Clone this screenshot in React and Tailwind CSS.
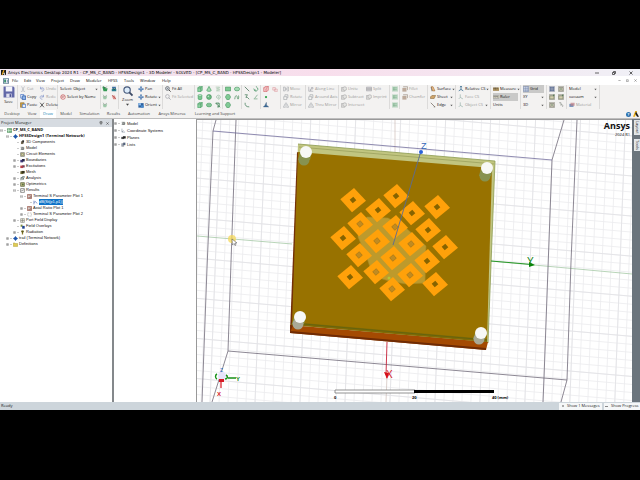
import React from "react";

const GREEN = "#3f9d5c";

/* Small 16x16 glyphs used by the menu bar, the ribbon and the trees. */
const GLYPHS = {
  app: <><rect x="1" y="2" width="14" height="12" fill="#fff" stroke="#4a6b86" strokeWidth="2" /><path d="M3 4h5v8H3z" fill="#3c8f72" /><path d="M10 5h3v7h-3z" fill="#7f97b5" /></>,
  logo: <><path d="M0 0h16v16H0z" fill="#1b1b1b" /><path d="M2 15 7 1h4L6 15z" fill="#ffb71b" /><path d="m10 7 4 8h-4l-2-4z" fill="#fff" /></>,
  logoLight: <><path d="M0 15 6 0h5L5 15z" fill="#e9ad12" /><path d="m8 1 8 14h-5L6 7z" fill="#1b1b1b" /></>,
  cut: <path d="m4 1 6 10M12 1 6 11M3 13a2 2 0 1 0 3-2M13 13a2 2 0 1 1-3-2" fill="none" stroke="#a8adb5" strokeWidth="1.6" />,
  undo: <path d="M4 2v6h6M4 8c3-5 9-4 9 1 0 3-3 5-6 5" fill="none" stroke="#8c9ccb" strokeWidth="2" />,
  redo: <path d="M12 2v6H6M12 8C9 3 3 4 3 9c0 3 3 5 6 5" fill="none" stroke="#8c9ccb" strokeWidth="2" />,
  copy: <><path d="M2 1h8v10H2z" fill="#fff" stroke="#4472c4" strokeWidth="2" /><path d="M6 5h9v10H6z" fill="#8db1e6" stroke="#2e5ca8" strokeWidth="2" /></>,
  paste: <><path d="M1 2h10v12H1z" fill="#d3a13a" stroke="#8a6420" strokeWidth="1.5" /><path d="M6 6h9v9H6z" fill="#e6effb" stroke="#4472c4" strokeWidth="2" /></>,
  x: <path d="m3 2 10 12M13 2 3 14" stroke="#444" strokeWidth="2.2" />,
  byname: <><circle cx="8" cy="8" r="6" fill="#fff" stroke="#c65454" strokeWidth="2" /><path d="M4 6h8M4 9h6" stroke="#b04a4a" strokeWidth="1.6" /></>,
  cart: <><path d="M1 2h5l2 4h7l-2 8H4z" fill="#379a55" /><path d="m4 1 4 5 4-4" stroke="#265e3a" strokeWidth="2" fill="none" /></>,
  cartBlue: <><path d="M2 8h12v6H2z" fill="#2b7f8f" /><path d="M3 2h10v5H3z" fill="#3b6ea5" /><path d="m5 5 3 5 5-4" stroke="#1d5740" strokeWidth="2" fill="none" /></>,
  cartRed: <><path d="M2 4h8l4 10H6z" fill="#e08b87" /><path d="m3 3 10 10" stroke="#a95e5e" strokeWidth="2" /></>,
  cartGrey: <><path d="M2 6h12l-3 8H4z" fill="#9fc9aa" /><path d="m3 2 4 6 6-5" stroke="#9aa69d" strokeWidth="2" fill="none" /></>,
  pan: <path d="M8 0 5 4h2v3H4V5L0 8l4 3V9h3v3H5l3 4 3-4H9V9h3v2l4-3-4-3v2H9V4h2z" fill="#2c63a5" />,
  orient: <><path d="M1 3h14v12H1z" fill="#2d62a0" /><path d="M1 3h7v6H1z" fill="#8dbbe8" /><path d="M8 9h7v6H8z" fill="#4588cc" /></>,
  fit: <><circle cx="6.500" cy="6.500" r="5" fill="#edf3fb" stroke="#56595f" strokeWidth="2" /><path d="m10 10 5 5" stroke="#444" strokeWidth="2.500" /><path d="M4 6.500h5M6.500 4v5" stroke="#56595f" strokeWidth="1.300" /></>,
  fitGrey: <><circle cx="6.500" cy="6.500" r="5" fill="#f1f1f1" stroke="#a9aab0" strokeWidth="2" /><path d="m10 10 5 5" stroke="#a9aab0" strokeWidth="2.500" /></>,
  box: <><path d="M2 5 6 1h8v10l-4 4H2z" fill="#8fd0a2" stroke={GREEN} strokeWidth="1.5" /><path d="M2 5h8v10M10 5l4-4" fill="none" stroke="#2c7a45" strokeWidth="1.2" /></>,
  cylinder: <><path d="M3 3v10c2 3 8 3 10 0V3z" fill="#7cc591" stroke={GREEN} strokeWidth="1.5" /><ellipse cx="8" cy="3.500" rx="5" ry="2.200" fill="#d1eeda" stroke={GREEN} /></>,
  cone: <path d="M8 1 2 12c2 3 10 3 12 0z" fill="#a9dab6" stroke={GREEN} strokeWidth="1.8" />,
  sphere: <><circle cx="8" cy="8" r="6.500" fill="#6dbd84" stroke="#37814d" strokeWidth="1.500" /><circle cx="6" cy="6" r="2" fill="#c8ebd2" /></>,
  torus: <><ellipse cx="8" cy="8" rx="7" ry="5" fill="#8ac89b" stroke={GREEN} strokeWidth="1.500" /><ellipse cx="8" cy="8" rx="3" ry="1.500" fill="#f2f1f0" stroke={GREEN} /></>,
  helix: <path d="M2 3h10c3 3-8 2-8 5h8c3 3-8 2-8 5h9" fill="none" stroke="#a1c4a9" strokeWidth="1.8" />,
  spiral: <path d="M8 8c1-2 3 0 2 2s-6 2-6-2 6-7 9-3 0 9-5 9" fill="none" stroke="#8eb79a" strokeWidth="1.7" />,
  bend: <path d="M2 3h9v10M2 3l11 11M11 13H6" fill="none" stroke="#3a7e50" strokeWidth="2.4" />,
  rect: <path d="M1 3h14v10H1z" fill="#7cc891" stroke="#3f9158" strokeWidth="1.6" />,
  ellipse: <ellipse cx="8" cy="8" rx="7" ry="5" fill="#a5dcb4" stroke="#459560" strokeWidth="1.6" />,
  hexagon: <path d="M5 1h6l4 7-4 7H5L1 8z" fill="#80ca95" stroke="#46945e" strokeWidth="1.5" />,
  wave: <path d="M2 14c1-12 6-12 7-4s5 2 3-6" fill="none" stroke="#519164" strokeWidth="2" />,
  line: <path d="m2 2 12 12" stroke="#2f5d41" strokeWidth="1.8" />,
  zig: <path d="M2 2h7L5 9h4l5 5" fill="none" stroke="#36704c" strokeWidth="1.800" />,
  arc: <path d="M3 2c-1 7 3 11 11 11" fill="none" stroke="#30704a" strokeWidth="1.8" />,
  arc3: <path d="M3 11c3 5 10 2 10-3S6 3 9 1M2 7l2 4 4 0" fill="none" stroke="#419160" strokeWidth="2" />,
  curve: <path d="M2 13h10M4 12 12 2" fill="none" stroke="#75a786" strokeWidth="2" />,
  redbox: <><path d="M2 5 6 1h8v10l-4 4H2z" fill="#fbe1e1" stroke="#cf5a60" strokeWidth="1.8" /><path d="M2 5h8v10M10 5l4-4M6 8v5" fill="none" stroke="#cf5a60" strokeWidth="1.5" /></>,
  pinkbox: <><path d="M2 4h7v7H2zM7 8h7v7H7z" fill="#f7e4e4" stroke="#dca1a5" strokeWidth="1.5" /></>,
  point: <circle cx="8" cy="8" r="3" fill="#2da248" />,
  plane: <path d="M1 13h14L9 8V1L5 9z" fill="#3e6f9c" stroke="#2c4c70" />,
  move: <path d="M1 3h5v10H1zM10 3h5v10h-5M5 8h6M9 5l3 3-3 3" fill="none" stroke="#999da3" strokeWidth="1.5" />,
  rotate: <path d="M2 7h8v8H2zM5 5V2h8v8h-2" fill="none" stroke="#999da3" strokeWidth="1.6" />,
  mirror: <path d="M8 1v14M6 4 1 14h5M10 4l5 10h-5" fill="none" stroke="#9fa2a8" strokeWidth="1.6" />,
  along: <path d="M2 2v12h12M5 9h3v3H5M9 4h4v4H9z" fill="none" stroke="#969aa0" strokeWidth="1.5" />,
  bool: <><path d="M1 4h9v10H1z" fill="#dddcda" stroke="#a5a5a5" strokeWidth="1.5" /><circle cx="10" cy="7" r="5" fill="#e4e4e2" stroke="#a5a5a5" strokeWidth="1.500" /></>,
  split: <><path d="M1 3h14v10H1z" fill="#cfced2" stroke="#a0a0a5" strokeWidth="1.5" /><path d="M1 8h14" stroke="#888" strokeWidth="1.5" /></>,
  sweep: <><path d="M0 1h16v14H0z" fill="#c3dac9" /><path d="M3 5h10M3 10h10M5 4v8" stroke="#6faa80" strokeWidth="1.6" /></>,
  fillet: <><path d="M1 5h11v10H1z" fill="#bdaa9b" /><path d="M3 2h12v9" fill="none" stroke="#a3978c" strokeWidth="2" /></>,
  surface: <><path d="M3 2h5l5 11H7z" fill="#efc28e" stroke="#a0672c" strokeWidth="1.6" /><path d="m3 3 2 11" stroke="#555" strokeWidth="1.5" /></>,
  sheet: <path d="M1 8 5 4h10l-4 8H1z" fill="#cfa369" stroke="#89693f" strokeWidth="1.500" />,
  edge: <path d="m2 2 11 11M10 13h4" stroke="#655b50" strokeWidth="1.8" />,
  cs: <path d="M8 9V1M8 9l6 4M8 9l-6 4M6 3l2-3 2 3" fill="none" stroke="#3b6f92" strokeWidth="2.200" />,
  csGrey: <path d="M6 9V1M6 9l7 4M6 9l-4 4" fill="none" stroke="#9cb5ae" strokeWidth="2" />,
  measure: <><path d="M0 4h16v9H0z" fill="#a78d5c" /><path d="M3 4v4M7 4v5M11 4v4" stroke="#403a2f" strokeWidth="1.5" /></>,
  ruler: <><path d="M0 5h16v6H0z" fill="#ddd9c8" stroke="#666" /><path d="M3 5v3M6 5v4M9 5v3M12 5v4" stroke="#333" /></>,
  grid: <path d="M1 1h14v14H1zM1 6h14M1 11h14M6 1v14M11 1v14" fill="#e8edf8" stroke="#6679a0" strokeWidth="1.4" />,
  snapGrid: <><path d="M0 0h16v16H0z" fill="#b9bdc7" /><path d="M2 4h12M2 8h12M2 12h12M4 2v12M8 2v12M12 2v12" stroke="#4b5f8a" strokeWidth="1.3" /></>,
  snapA: <><path d="M0 0h16v16H0z" fill="#bbbab2" /><path d="M3 4h10v9H3z" fill="#ded9c4" stroke="#7b7c70" strokeWidth="1.5" /><circle cx="8" cy="8" r="2" fill="#44694b" /></>,
  snapB: <><path d="M0 0h16v16H0z" fill="#b8b8b0" /><path d="M2 5h11v8H2z" fill="#d2cfad" stroke="#7a7c68" strokeWidth="1.5" /><path d="m11 5 3-3" stroke="#567d54" strokeWidth="3" /></>,
  snapC: <path d="M3 2h5v7M8 9c1-5 7-1 4 4" fill="none" stroke="#7b817a" strokeWidth="1.600" />,
  material: <><path d="M1 5h11v8H1z" fill="#6d8db8" /><path d="M4 2h11v8H4z" fill="#c18489" opacity=".75" /></>,
  project: <><path d="M1 2h14v12H1z" fill="#7dbc89" stroke="#438452" strokeWidth="2" /><path d="M5 2v12M1 8h14" stroke="#e3f4e6" strokeWidth="1.5" /></>,
  design: <path d="m8 0 3 4 5 4-5 4-3 4-3-4-5-4 5-4z" fill="#1d55ac" />,
  comp: <><path d="M3 4h8v9H3z" fill="#726854" /><path d="M7 1h6v7H7z" fill="#32312c" /></>,
  model: <><circle cx="8" cy="8" r="5" fill="#9b9d9d" /><path d="M2 4h10v7H2" fill="none" stroke="#5b605d" strokeWidth="1.600" /></>,
  circuit: <><path d="M2 2h12v12H2z" fill="#d4d2b8" stroke="#575750" strokeWidth="1.800" /><path d="M4 5h7v6H5z" fill="none" stroke="#7e7d42" strokeWidth="1.600" /></>,
  bound: <><path d="M1 6h9v8H1z" fill="#3d3778" /><path d="M6 3h9v8H8z" fill="#252546" /></>,
  excite: <><path d="M1 5h9v8H1z" fill="#bc3f45" /><path d="M7 4h8v7H9z" fill="#714159" /></>,
  mesh: <><path d="M1 4h10v9H1z" fill="#75703a" /><path d="M5 3h10v8H5z" fill="#36331d" /></>,
  analysis: <path d="M3 14V5h7M7 2h7L9 13M4 9h7" fill="none" stroke="#374c48" strokeWidth="2" />,
  opti: <><path d="M2 2h12v12H2z" fill="#bab782" stroke="#4e5530" strokeWidth="2" /><circle cx="9" cy="8" r="3" fill="#5a7140" /></>,
  results: <><path d="M2 2h12v12H2z" fill="#fff" stroke="#5b5b58" strokeWidth="2" /><path d="m4 11 3-5 2 3 3-5" fill="none" stroke="#555" strokeWidth="1.5" /></>,
  plot: <><path d="M1 2h14v12H1z" fill="#f7f0ed" stroke="#8b4638" strokeWidth="2.400" /><path d="M4 6h8v5H4" fill="none" stroke="#5b3129" strokeWidth="1.8" /></>,
  plotEmpty: <path d="M2 3h12v10H2z" fill="#fff" stroke="#aaa" strokeWidth="2" strokeDasharray="5 2" />,
  trace: <path d="M3 2v12M3 8l5-3 5 6" fill="none" stroke="#4a66b0" strokeWidth="2" />,
  port: <path d="M2 2h12v12H2zM8 2v12M2 8h12" fill="#eae9e0" stroke="#75746b" strokeWidth="1.600" />,
  field: <><path d="M2 2h6v7H2z" fill="#7b8d3f" /><path d="M7 6h8v9H7z" fill="#20438f" /></>,
  radiation: <><path d="M3 2h10l-3 6v6H6V8z" fill="#867827" /><circle cx="8" cy="5" r="3.500" fill="#5c5a1b" /></>,
  folder: <path d="M1 3h5l2 2h7v9H1z" fill="#e2cc56" stroke="#a4922e" strokeWidth="1.4" />,
  csys: <path d="M3 2v11h10M3 13l5-5" fill="none" stroke="#77828e" strokeWidth="1.8" />,
  planes: <><path d="M1 6h9v7H1z" fill="#4a4a4a" /><path d="M6 4h9v7H8z" fill="#222" /></>,
  lists: <><path d="M2 5h7v9H2z" fill="#9ba4b3" stroke="#666" /><path d="M7 2h7v8H7z" fill="#53627b" /></>,
};

function Glyph({ name, className = "size-[6px]" }) {
  return <svg viewBox="0 0 16 16" className={`shrink-0 ${className}`} aria-hidden="true">{GLYPHS[name]}</svg>;
}

function Caret() {
  return <svg viewBox="0 0 8 8" className="ml-auto size-[3px] shrink-0" aria-hidden="true"><path d="M1 2h6L4 6z" fill="#555" /></svg>;
}

function Tool({ icon, label, off, caret, active }) {
  return (
    <button className={`flex h-[8px] w-full items-center gap-px whitespace-nowrap ${off ? "text-[#9b9a9a]" : "text-[#111]"} ${active ? "bg-[#c9c9c8]" : ""}`}>
      {icon && <Glyph name={icon} />}
      <span>{label}</span>
      {caret && <Caret />}
    </button>
  );
}

function Pick({ label, value }) {
  return (
    <label className="flex h-[8px] w-full items-center text-[#111]">
      <select aria-label={label} className="h-[8px] min-w-0 flex-1 appearance-none bg-transparent leading-[8px]" defaultValue={value}>
        <option>{value}</option>
      </select>
      <Caret />
    </label>
  );
}

function Group({ width, children, last }) {
  return (
    <div className={`flex h-[24px] shrink-0 flex-col justify-start px-[2px] ${last ? "" : "border-r border-[#dcdbda]"} ${width}`}>
      {children}
    </div>
  );
}

function IconGroup({ width, cols, icons }) {
  return (
    <div className={`grid h-[24px] shrink-0 content-start justify-items-center border-r border-[#dcdbda] ${cols} ${width}`}>
      {icons.map((n, i) => n
        ? <button key={i} aria-label={n} className="flex h-[8px] items-center"><Glyph name={n} /></button>
        : <span key={i} />)}
    </div>
  );
}

function Ribbon() {
  return (
    <div className="flex overflow-hidden bg-[#f3f2f1] pb-px">
      <button className="flex h-[24px] w-[18px] shrink-0 flex-col items-center gap-px border-r border-[#dcdbda] pt-px">
        <svg viewBox="0 0 22 22" className="size-[12px]" aria-hidden="true">
          <path d="M1 1h18l2 2v18H1z" fill="#6268a8" /><path d="M5 1h12v9H5z" fill="#f5f5fb" /><path d="M6 14h10v7H6z" fill="#dfe0f0" /><path d="M12 15h3v5h-3z" fill="#4c528f" />
        </svg>
        <span>Save</span>
      </button>
      <Group width="w-[19px]" last>
        <Tool icon="cut" label="Cut" off /><Tool icon="copy" label="Copy" /><Tool icon="paste" label="Paste" />
      </Group>
      <Group width="w-[21px]">
        <Tool icon="undo" label="Undo" off /><Tool icon="redo" label="Redo" off /><Tool icon="x" label="Delete" />
      </Group>
      <Group width="w-[43px]">
        <Pick label="Selection mode" value="Select: Object" /><Tool icon="byname" label="Select by Name" />
      </Group>
      <IconGroup width="w-[18px]" cols="grid-cols-2" icons={["cart", "cartBlue", "cartGrey", "cartRed", "cartGrey"]} />
      <button className="flex h-[24px] w-[17px] shrink-0 flex-col items-center">
        <svg viewBox="0 0 22 22" className="h-[12px] w-[10px]" aria-hidden="true">
          <circle cx="9" cy="9" r="7" fill="#dcebf9" stroke="#46597b" strokeWidth="2.500" /><path d="m14 14 7 7" stroke="#3b4965" strokeWidth="4" />
        </svg>
        <span>Zoom</span>
        <svg viewBox="0 0 8 8" className="size-[3px]" aria-hidden="true"><path d="M0 2h8L4 7z" fill="#444" /></svg>
      </button>
      <Group width="w-[27px]">
        <Tool icon="pan" label="Pan" /><Tool icon="pan" label="Rotate" caret /><Tool icon="orient" label="Orient" caret />
      </Group>
      <Group width="w-[32px]">
        <Tool icon="fit" label="Fit All" /><Tool icon="fitGrey" label="Fit Selected" off />
      </Group>
      <IconGroup width="w-[28px]" cols="grid-cols-3" icons={["box", "cone", "helix", "cylinder", "sphere", "spiral", "box", "torus", "bend"]} />
      <IconGroup width="w-[19px]" cols="grid-cols-2" icons={["rect", "ellipse", "hexagon", "wave", "hexagon"]} />
      <IconGroup width="w-[19px]" cols="grid-cols-2" icons={["line", "arc3", "zig", "curve", "arc"]} />
      <IconGroup width="w-[20px]" cols="grid-cols-2" icons={["redbox", "pinkbox", "point", null, "plane"]} />
      <Group width="w-[25px]">
        <Tool icon="move" label="Move" off /><Tool icon="rotate" label="Rotate" off /><Tool icon="mirror" label="Mirror" off />
      </Group>
      <Group width="w-[33px]">
        <Tool icon="along" label="Along Line" off /><Tool icon="rotate" label="Around Axis" off /><Tool icon="mirror" label="Thru Mirror" off />
      </Group>
      <div className="flex w-[51px] shrink-0">
        <Group width="w-[25px]" last>
          <Tool icon="bool" label="Unite" off /><Tool icon="bool" label="Subtract" off /><Tool icon="bool" label="Intersect" off />
        </Group>
        <Group width="w-[26px]">
          <Tool icon="split" label="Split" off /><Tool icon="bool" label="Imprint" off />
        </Group>
      </div>
      <IconGroup width="w-[10px]" cols="grid-cols-1" icons={["sweep", "sweep", "sweep"]} />
      <Group width="w-[28px]">
        <Tool icon="fillet" label="Fillet" off /><Tool icon="fillet" label="Chamfer" off />
      </Group>
      <Group width="w-[28px]">
        <Tool icon="surface" label="Surface" caret /><Tool icon="sheet" label="Sheet" caret /><Tool icon="edge" label="Edge" caret />
      </Group>
      <Group width="w-[35px]">
        <Tool icon="cs" label="Relative CS" caret /><Tool icon="csGrey" label="Face CS" off /><Tool icon="csGrey" label="Object CS" off caret />
      </Group>
      <Group width="w-[30px]">
        <Tool icon="measure" label="Measure" caret /><Tool icon="ruler" label="Ruler" active /><Tool label="Units" />
      </Group>
      <Group width="w-[26px]">
        <Tool icon="grid" label="Grid" active /><Pick label="Plane" value="XY" /><Pick label="Dimension" value="3D" />
      </Group>
      <IconGroup width="w-[20px]" cols="grid-cols-2" icons={["snapGrid", "snapA", "snapB", "snapB", "snapA", "snapC"]} />
      <Group width="w-[33px]">
        <Pick label="Object type" value="Model" /><Pick label="Material choice" value="vacuum" /><Tool icon="material" label="Material" off />
      </Group>
    </div>
  );
}

const MENU = [
  ["File", "w-[12px]"], ["Edit", "w-[12px]"], ["View", "w-[15px]"], ["Project", "w-[19px]"], ["Draw", "w-[16px]"],
  ["Modeler", "w-[22px]"], ["HFSS", "w-[16px]"], ["Tools", "w-[16px]"], ["Window", "w-[22px]"], ["Help", "w-[12px]"],
];

const TABS = [
  ["Desktop", "w-[24px]"], ["View", "w-[16px]"], ["Draw", "w-[16px]"], ["Model", "w-[20px]"], ["Simulation", "w-[27px]"],
  ["Results", "w-[21px]"], ["Automation", "w-[30px]"], ["Ansys Minerva", "w-[36px]"], ["Learning and Support", "w-[50px]"],
];

/* [depth, expander, glyph, label, style] */
const PROJECT = [
  [0, "-", "project", "CP_MS_C_BAND", "bold"],
  [1, "-", "design", "HFSSDesign1 (Terminal Network)", "bold"],
  [2, "", "comp", "3D Components"],
  [2, "", "model", "Model"],
  [2, "", "circuit", "Circuit Elements"],
  [2, "+", "bound", "Boundaries"],
  [2, "+", "excite", "Excitations"],
  [2, "", "mesh", "Mesh"],
  [2, "+", "analysis", "Analysis"],
  [2, "+", "opti", "Optimetrics"],
  [2, "-", "results", "Results"],
  [3, "-", "plot", "Terminal S Parameter Plot 1"],
  [4, "", "trace", "dB(St(p1,p1))", "selected"],
  [3, "+", "plot", "Axial Ratio Plot 1"],
  [3, "+", "plotEmpty", "Terminal S Parameter Plot 2"],
  [2, "+", "port", "Port Field Display"],
  [2, "", "field", "Field Overlays"],
  [2, "+", "radiation", "Radiation"],
  [1, "+", "design", "trail (Terminal Network)"],
  [1, "+", "folder", "Definitions"],
];

const MODEL = [
  [0, "+", "model", "Model"],
  [0, "+", "csys", "Coordinate Systems"],
  [0, "+", "planes", "Planes"],
  [0, "+", "lists", "Lists"],
];

const INDENT = ["pl-0", "pl-[6px]", "pl-[13px]", "pl-[20px]", "pl-[26px]"];
const STYLES = { bold: "font-['Open_Sans',sans-serif] font-bold", selected: "bg-[#0f73c8] text-white" };

function Tree({ rows, rowHeight }) {
  return (
    <ul className="text-[#111]">
      {rows.map(([depth, exp, glyph, label, style]) => (
        <li key={label} className={`flex items-center gap-px whitespace-nowrap ${rowHeight} ${INDENT[depth]}`}>
          {exp
            ? <button aria-label={exp === "+" ? "Expand" : "Collapse"} className="size-[3px] shrink-0">
                <svg viewBox="0 0 9 9" className="size-[3px]" aria-hidden="true">
                  <path d="M1 1h7v7H1z" fill="#fff" stroke="#999" strokeWidth="1.500" /><path d={exp === "+" ? "M1 4.500h7M4.500 1v7" : "M1 4.500h7"} stroke="#555" />
                </svg>
              </button>
            : <span className="w-[3px] shrink-0" />}
          <span className="h-px w-[2px] shrink-0 bg-[#ccc]" />
          <Glyph name={glyph} className="size-[5px]" />
          <span className={style ? STYLES[style] : ""}>{label}</span>
        </li>
      ))}
    </ul>
  );
}

/* Patch centres on the board; inner ones sit above the translucent layer. */
const PATCHES = [
  [353, 200], [396, 196], [378, 210, 0], [412, 213], [437, 207], [360, 224, 1], [395, 227, 1], [428, 230],
  [343, 238], [377, 241, 1], [411, 244, 1], [445, 247], [359, 255, 1], [393, 258, 1], [427, 261],
  [350, 277], [376, 272, 1], [410, 275, 1], [435, 284], [392, 289, 1],
];

const POSTS = [[306, 152, -2, 8], [487, 168, -2, 8], [300, 317, -2, 7], [481, 333, -2, 6]];

function Scene() {
  return (
    <svg viewBox="197 120 435 282" preserveAspectRatio="xMidYMid slice" className="size-full" role="img" aria-label="3D model">
      <defs>
        <pattern id="fine" width="9" height="8" patternUnits="userSpaceOnUse" patternTransform="matrix(.996 .087 -.038 .999 0 0)">
          <path d="M0 .5h9M.5 0v8" stroke="#ebebee" strokeWidth=".8" fill="none" />
        </pattern>
        <pattern id="coarse" width="45" height="40" patternUnits="userSpaceOnUse" patternTransform="matrix(.996 .087 -.038 .999 0 0)">
          <path d="M0 .5h45M.5 0v40" stroke="#e2e2e6" strokeWidth=".8" fill="none" />
        </pattern>
      </defs>
      <path d="M197 120h435v282H197z" fill="#fff" />
      <path d="M197 120h435v282H197z" fill="url(#fine)" />
      <path d="M197 120h435v282H197z" fill="url(#coarse)" />
      <path d="M395 120v40M387 375l-1 27" stroke="#c6b4ac" strokeWidth=".6" />
      <path d="m197 236 95 8M490 261l142 13" stroke="#9ac29a" strokeWidth=".7" />
      <g fill="none" stroke="#706a78" strokeWidth=".8">
        <path d="m216 120-3 11-6 137-5 134M236 120l-5 142-3 89-16 51M564 120l-12 40-4 108-4 110-1 24M577 120l-6 142-4 118-6 22M228 351l339 29" />
        <path d="m213 131 339 29" stroke="#746f9d" />
      </g>
      <path d="m298 144 197 17-7 182-197-18z" fill="#c1c580" />
      <path d="m298 144 197 17-7 182" fill="none" stroke="#8c9a50" strokeWidth=".8" />
      <path d="m299 147 195 17" stroke="#8e9552" strokeWidth=".6" />
      <path d="m290 325 198 17-2 8-196-17z" fill="#a44a02" />
      <path d="m290 331 196 17v2l-196-17z" fill="#6f2b04" />
      <path d="m297 152 2 1-6 172-3 8z" fill="#732f08" />
      <path d="m298 152 194 16-5 173-195-17z" fill="#987200" />
      <path d="m292 322 195 17v3l-196-17z" fill="#806a05" />
      <path d="m292 323 195 17" stroke="#525f14" strokeWidth=".6" />
      <path d="m367 217 21 1 18 10 20 18-1 37-19 1-17-3-16-5-6-18-9-21v-10z" fill="#bd9a2c" stroke="#a78c29" strokeWidth=".6" />
      {PATCHES.map(([x, y, over]) => (
        <g key={`${x}-${y}`} transform={`translate(${x} ${y})`}>
          <path d="M-12.700-.7 1-12 13 .7-1 12.300z" fill="#ffa10a" />
          <path d="M-3.300-.3.300-3.300 3.300.300-.300 3.300z" fill={over ? "#c08b22" : "#856300"} stroke={over ? "#8f6b18" : "none"} strokeWidth=".5" />
        </g>
      ))}
      <circle cx="389" cy="278" r="1.500" fill="#b9c433" />
      {POSTS.map(([x, y, dx, dy]) => (
        <g key={x}>
          <path d={`M${x - 6} ${y}h12l${dx} ${dy}h-12z`} fill="#8a9248" />
          <circle cx={x + dx} cy={y + dy} r="5.500" fill={y > 300 ? "#a9a996" : "#879250"} />
          <circle cx={x} cy={y} r="6" fill="#f7f8f6" />
        </g>
      ))}
      <path d="m421 151-28 94" stroke="#596b96" strokeWidth=".9" />
      <circle cx="421" cy="152" r="2" fill="#2a62d8" />
      <path d="m491 261 41 3.500" stroke="#169016" strokeWidth=".9" />
      <path d="m529 262 6 3-6 2z" fill="#078307" />
      <path d="m387 342-1 33" stroke="#c52038" strokeWidth=".9" />
      <path d="m384 372 5 1-2 6z" fill="#d50f18" />
      <g fontFamily="Liberation Sans, sans-serif">
        <text x="421" y="149" fontSize="9" fill="#3566b8">Z</text>
        <text x="527" y="265" fontSize="10" fill="#168616">Y</text>
        <text x="386" y="378" fontSize="10" fill="#d71924">X</text>
        <text x="220" y="372" fontSize="5" fill="#286fce">Z</text>
        <text x="236" y="381" fontSize="6" fontWeight="bold" fill="#168616">Y</text>
        <text x="217" y="396" fontSize="6" fontWeight="bold" fill="#d71924">X</text>
        <g fontFamily="Open Sans, sans-serif" fontWeight="bold" fontSize="4">
          <text x="334" y="399">0</text>
          <text x="412" y="399">20</text>
          <text x="492" y="399">40 (mm)</text>
        </g>
        <g fontFamily="Open Sans, sans-serif" textAnchor="end" fill="#111">
          <text x="630" y="129" fontSize="9" fontWeight="bold">Ansys</text>
          <text x="630" y="136" fontSize="4">2024 R1</text>
        </g>
      </g>
      <circle cx="222" cy="376" r="4" fill="#e7e3fb" />
      <path d="M217 374c-2 1-2 4 0 5M225 379c3 0 3-3 1-4M228 378h8" fill="none" stroke="#169016" strokeWidth="1.400" />
      <path d="M221 381v7" stroke="#d71924" strokeWidth="1.200" />
      <path d="M219 379h5v3h-5z" fill="#d71924" />
      <path d="M335 390h80v3h-80z" fill="#fff" stroke="#777" strokeWidth=".8" />
      <path d="M414 390h80v3h-80z" />
      <circle cx="232" cy="239" r="4" fill="#f6d85a" opacity=".75" />
      <path d="m232 239 .5 6 1.500-1.500 1 2 1-.5-1-2h2z" fill="#fff" stroke="#444" strokeWidth=".5" />
    </svg>
  );
}

export default function App() {
  return (
    <div className="flex min-h-screen flex-col bg-black pt-[69px] pb-[70px] font-['Open_Sans',sans-serif] text-[4px] leading-[6px] text-[#222]">
      <header>
        <div className="flex h-[7px] items-center bg-linear-to-r from-[#efe5ef] via-[#f8deec] to-[#f0f0f6] pr-[7px] pl-px">
          <Glyph name="logo" className="size-[5px]" />
          <h1 className="pl-[2px] font-['DejaVu_Sans',sans-serif] whitespace-nowrap text-black">Ansys Electronics Desktop 2024 R1 - CP_MS_C_BAND - HFSSDesign1 - 3D Modeler - SOLVED - [CP_MS_C_BAND - HFSSDesign1 - Modeler]</h1>
          <div className="ml-auto flex gap-[13px]">
            {[["Minimize", "M0 4h8"], ["Restore", "M1 3h4v4H1zM3 3V1h4v4H5"], ["Close", "m1 1 6 6M7 1 1 7"]].map(([n, d]) => (
              <button key={n} aria-label={n}><svg viewBox="0 0 8 8" className="size-[4px]" aria-hidden="true"><path d={d} fill="none" stroke="#333" strokeWidth="1.500" /></svg></button>
            ))}
          </div>
        </div>
        <nav className="flex h-[9px] items-center bg-white pr-[3px] pl-[3px]">
          <Glyph name="app" />
          <div className="flex pl-[3px] text-black">
            {MENU.map(([label, w]) => <button key={label} className={`text-left whitespace-nowrap ${w}`}>{label}</button>)}
          </div>
          <div className="ml-auto flex gap-[5px]">
            {[["Minimize design", "M1 4h6"], ["Restore design", "M1 2h5v5H1z"], ["Close design", "m1 1 6 6M7 1 1 7"]].map(([n, d]) => (
              <button key={n} aria-label={n}><svg viewBox="0 0 8 8" className="size-[3px]" aria-hidden="true"><path d={d} fill="none" stroke="#777" strokeWidth="1.500" /></svg></button>
            ))}
          </div>
        </nav>
        <Ribbon />
        <nav className="flex h-[9px] items-center border-b border-[#bdbdbd] bg-[#f3f2f1]">
          {TABS.map(([label, w]) => (
            <button key={label} className={`h-full text-center whitespace-nowrap ${w} ${label === "Draw" ? "bg-white text-[#1684b4]" : "text-[#444]"}`}>{label}</button>
          ))}
          <button aria-label="Help" className="ml-auto size-[5px] rounded-full bg-[#2b70ae] text-center leading-[5px] font-bold text-white">?</button>
          <Glyph name="logoLight" className="mr-px ml-[2px] size-[6px]" />
        </nav>
      </header>

      <main className="flex flex-1">
        <aside className="w-[112px] shrink-0 bg-white font-['Liberation_Sans',sans-serif]">
          <div className="flex h-[8px] items-center bg-[#d6dbe1] pr-[3px] pl-px font-['Open_Sans',sans-serif]">
            <h2>Project Manager</h2>
            <button aria-label="Pin" className="ml-auto"><svg viewBox="0 0 8 8" className="size-[4px]" aria-hidden="true"><path d="M2 1h4v3H2zM1 4h6M4 4v4" fill="none" stroke="#444" /></svg></button>
            <button aria-label="Close panel" className="ml-[3px]"><svg viewBox="0 0 8 8" className="size-[3px]" aria-hidden="true"><path d="m1 1 6 6M7 1 1 7" stroke="#444" strokeWidth="1.500" /></svg></button>
          </div>
          <Tree rows={PROJECT} rowHeight="h-[6px]" />
        </aside>
        <div className="w-[2px] shrink-0 bg-[#84888b]" />
        <section className="w-[82px] shrink-0 bg-white pt-px font-['Liberation_Sans',sans-serif]">
          <Tree rows={MODEL} rowHeight="h-[7px]" />
        </section>
        <section className="min-w-0 flex-1 border-t border-l border-[#999] bg-white">
          <Scene />
        </section>
        <aside className="flex w-[8px] shrink-0 flex-col items-end gap-[4px] bg-[#6b757d] pt-px">
          <button className="h-[15px] w-[6px] bg-[#e3e7ea] [writing-mode:vertical-rl]">Layout</button>
          <button className="h-[12px] w-[6px] bg-[#e3e7ea] [writing-mode:vertical-rl]">Tools</button>
        </aside>
      </main>

      <footer className="flex h-[8px] items-center bg-[#cdd5db] pl-px">
        <span>Ready</span>
        <button className="ml-auto flex h-[7px] w-[43px] items-center gap-[3px] bg-[#f5f7f8] pl-[3px] whitespace-nowrap"><span className="size-[2px] bg-[#aaa]" />Show 1 Messages</button>
        <button className="ml-[2px] flex h-[7px] w-[36px] items-center gap-[3px] bg-[#f5f7f8] pl-px whitespace-nowrap"><span className="h-px w-[3px] bg-[#888]" />Show Progress</button>
      </footer>
    </div>
  );
}
